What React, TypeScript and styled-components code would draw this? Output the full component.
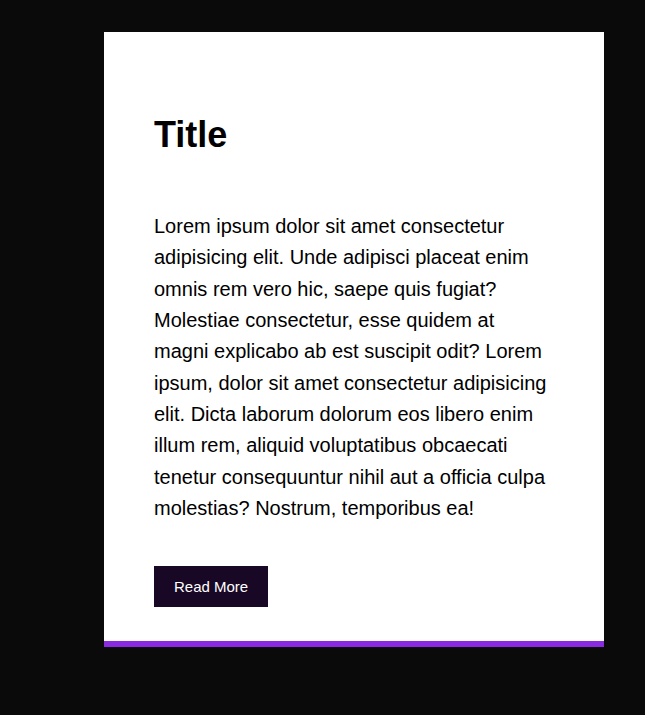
import React from "react";
import styled, { createGlobalStyle } from "styled-components";

const GlobalStyle = createGlobalStyle`
  html, body {
    margin: 0;
    padding: 0;
    background: #0a0a0a;
    font-family: "Liberation Sans", Arial, sans-serif;
  }
`;

const Page = styled.main`
  min-height: 715px;
  box-sizing: border-box;
  padding: 32px 0 0 104px;
`;

const Card = styled.article`
  width: 500px;
  box-sizing: border-box;
  background: #ffffff;
  padding: 0 50px 34px;
  border-bottom: 6px solid #8a2be2;
  display: flex;
  flex-direction: column;
  align-items: flex-start;
`;

const Title = styled.h1`
  margin: 82px 0 55px;
  font-size: 36px;
  font-weight: 700;
  color: #000;
  line-height: normal;
`;

const Body = styled.p`
  margin: 0;
  font-size: 20px;
  line-height: 31.33px;
  color: #000;
`;

const Button = styled.button`
  margin-top: 42px;
  padding: 12px 20px;
  border: none;
  border-radius: 0;
  background: #180826;
  color: #ffffff;
  font-family: "Liberation Sans", Arial, sans-serif;
  font-size: 15px;
  line-height: normal;
  cursor: pointer;
`;

export default function App() {
  return (
    <>
      <GlobalStyle />
      <Page>
        <Card>
          <Title>Title</Title>
          <Body>
            Lorem ipsum dolor sit amet consectetur adipisicing elit. Unde adipisci placeat enim omnis rem vero hic,
            saepe quis fugiat? Molestiae consectetur, esse quidem at magni explicabo ab est suscipit odit? Lorem ipsum,
            dolor sit amet consectetur adipisicing elit. Dicta laborum dolorum eos libero enim illum rem, aliquid
            voluptatibus obcaecati tenetur consequuntur nihil aut a officia culpa molestias? Nostrum, temporibus ea!
          </Body>
          <Button>Read More</Button>
        </Card>
      </Page>
    </>
  );
}
